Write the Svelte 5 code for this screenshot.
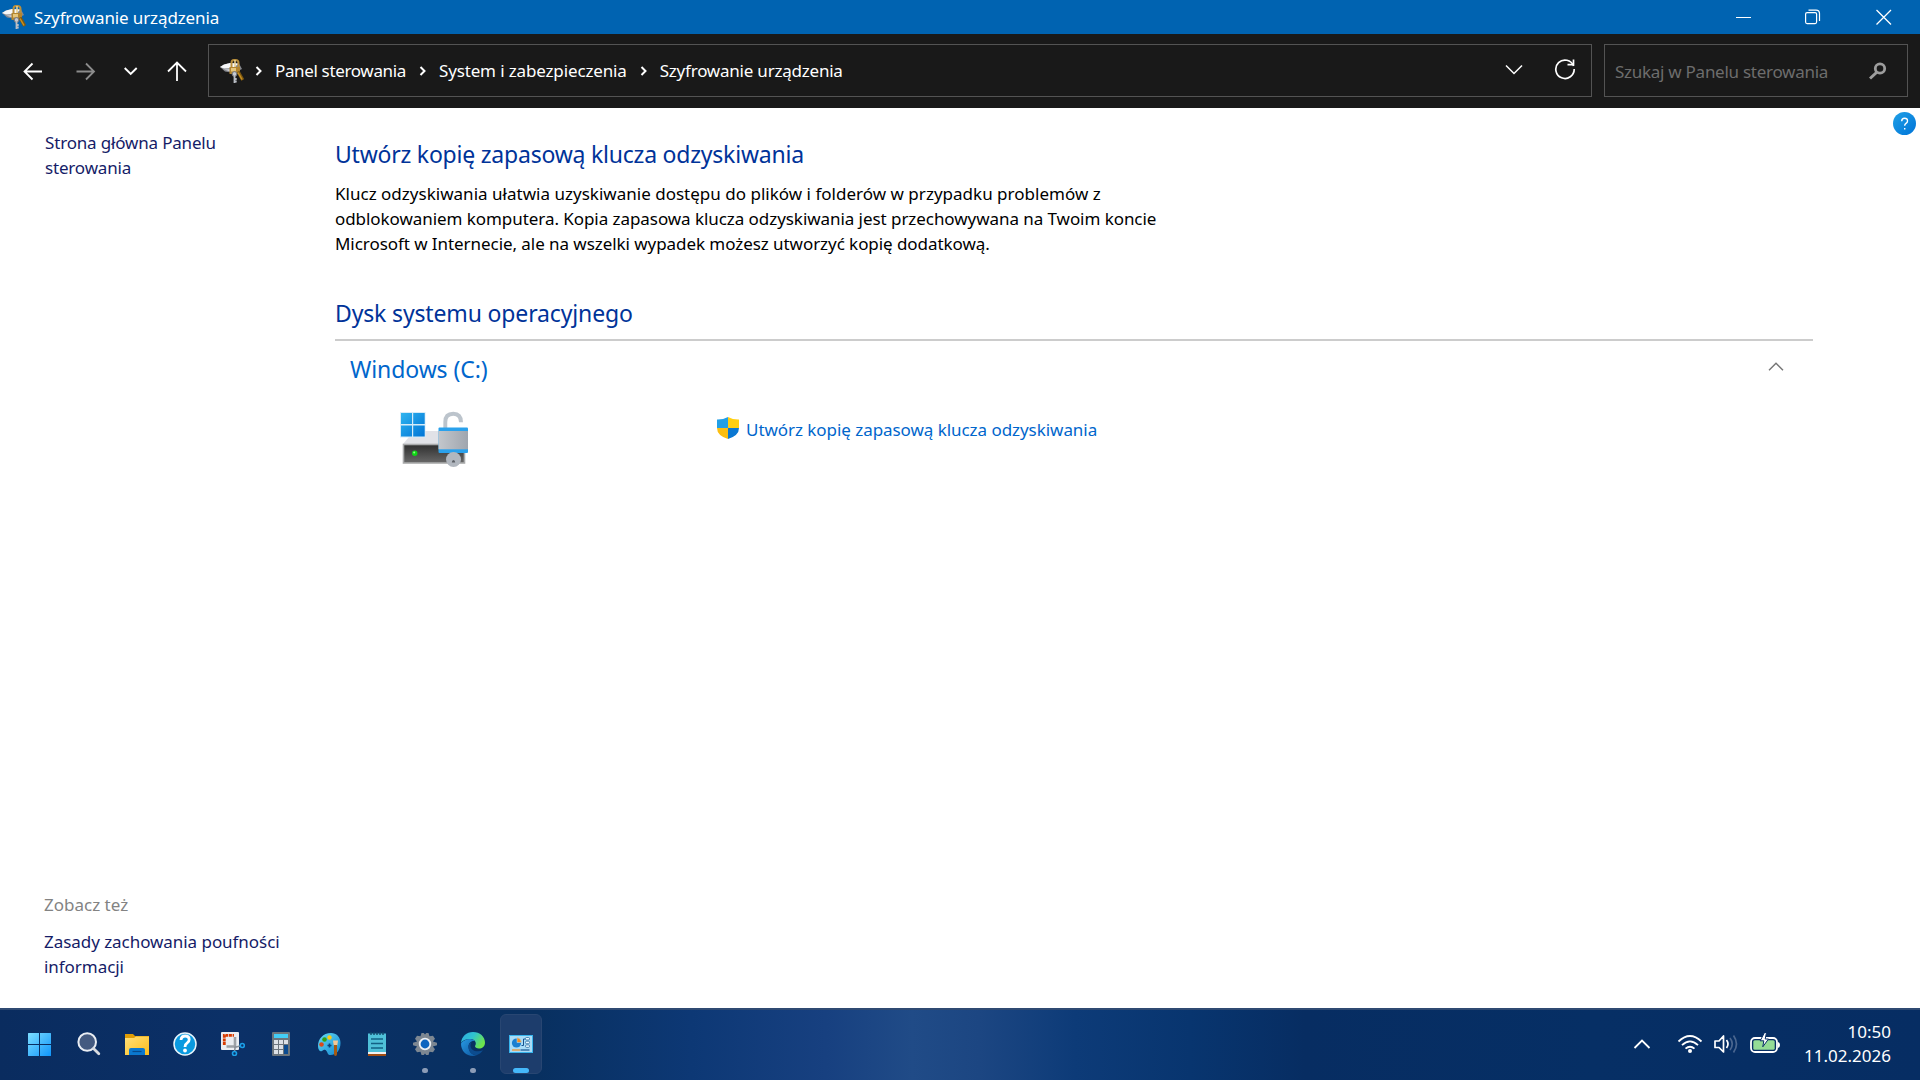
<script>
  const crumbs = [
    { id: 'panel', label: 'Panel sterowania' },
    { id: 'system', label: 'System i zabezpieczenia' },
    { id: 'device', label: 'Szyfrowanie urządzenia' }
  ];

  const lines = [
    'Klucz odzyskiwania ułatwia uzyskiwanie dostępu do plików i folderów w przypadku problemów z',
    'odblokowaniem komputera. Kopia zapasowa klucza odzyskiwania jest przechowywana na Twoim koncie',
    'Microsoft w Internecie, ale na wszelki wypadek możesz utworzyć kopię dodatkową.'
  ];

  const apps = [
    { name: 'start' },
    { name: 'search' },
    { name: 'explorer' },
    { name: 'help' },
    { name: 'snip' },
    { name: 'calc' },
    { name: 'paint' },
    { name: 'notepad' },
    { name: 'settings', running: true },
    { name: 'edge', running: true },
    { name: 'control', active: true }
  ];

  let expanded = $state(true);
  let query = $state('');
</script>

{#snippet keyIcon()}
  <svg class="key-icon" width="24" height="24" viewBox="0 0 24 24">
    <path d="M0 8l4-2.500L10 4l9 .5 3 5.500-8 4-9-1.500z" fill="#85878d" />
    <path d="M0 8l4-2.500L10 4l9 .5-6 4.500-9 .5z" fill="#f6f7f9" />
    <path d="M4 10.500l8-.5v3z" fill="#cfd1d6" />
    <path d="M11.500 8V4Q11.500 1 14 1h1.500Q18.500 1 18.500 4v4" fill="none" stroke="#b98f3c" stroke-width="2" />
    <path d="M15 1v8" stroke="#e9d08f" stroke-width="1.600" />
    <path d="M9.500 8h10.500v7H9.500z" fill="#b3852f" />
    <path d="M11 9h5v3.500h-5z" fill="#e6c67a" />
    <path d="M18 12.500l4.800 8.500" stroke="#7d5810" stroke-width="3.400" />
    <path d="M18 13.500l4 7" stroke="#c99122" stroke-width="1.500" />
    <circle cx="14.500" cy="15" r="2.400" fill="#c7cbd1" stroke="#6f7177" />
    <path d="M14.500 17v7M15 20h1.700M15 22.500h1.700" stroke="#b9bdc4" stroke-width="1.800" />
  </svg>
{/snippet}

{#snippet crumbArrow()}
  <svg class="crumb-arrow" width="8" height="12" viewBox="0 0 8 12">
    <path d="M1.500 2l4 4-4 4" fill="none" stroke="#fff" stroke-width="2" />
  </svg>
{/snippet}

{#snippet appIcon(name)}
  <svg width="24" height="24" viewBox="0 0 24 24">
    {#if name === 'start'}
      <defs>
        <linearGradient id="start" x1="0" y1="0" x2="24" y2="24" gradientUnits="userSpaceOnUse">
          <stop offset="0" stop-color="#7fdfff" />
          <stop offset="1" stop-color="#0d94fb" />
        </linearGradient>
      </defs>
      <path d="M0 1.500q0-.5.5-.5H11v11H0zM12 1h10.500q.5 0 .5.500V12H12zM0 13h11v11H.5q-.5 0-.5-.5zM12 13h11v10.500q0 .5-.5.500H12z" fill="url(#start)" />
    {:else if name === 'search'}
      <circle cx="10.200" cy="10" r="8.800" fill="#445a80" stroke="#e9edf3" stroke-width="2" />
      <path d="M16.500 16.500l5.300 5.300" stroke="#d8dbe0" stroke-width="2.800" stroke-linecap="round" />
    {:else if name === 'explorer'}
      <defs>
        <linearGradient id="folder" x1="0" y1="0" x2="1" y2="1">
          <stop offset="0" stop-color="#ffe07a" />
          <stop offset="1" stop-color="#fdbd19" />
        </linearGradient>
      </defs>
      <path d="M0 2h8l2 2h14v8H0z" fill="#e09d05" />
      <path d="M0 6h9l2-1.500h13V23H0z" fill="url(#folder)" />
      <path d="M4 23v-5q0-2 2-2h12q2 0 2 2v5z" fill="#0b78cf" />
      <path d="M7.500 19.500h9" stroke="#06498c" stroke-width="1.200" />
    {:else if name === 'help'}
      <circle cx="12" cy="12" r="11" fill="#0a9ae0" stroke="#e8f4fb" stroke-width="1.500" />
      <path d="M8 8q.3-4 4.200-4 4 0 4 3.500 0 2-2 3.400-2.200 1.400-2.200 4" fill="none" stroke="#fff" stroke-width="2.800" />
      <circle cx="12" cy="18.500" r="1.900" fill="#fff" />
    {:else if name === 'snip'}
      <rect x="0" y="0" width="18" height="18" rx="1" fill="#eceef2" />
      <path d="M3.300 13V3.300H13" fill="none" stroke="#d83b01" stroke-width="2.800" stroke-dasharray="2.900 .7" />
      <path d="M5.500 14.500H14V5" fill="none" stroke="#9da1a6" stroke-width="2.600" />
      <path d="M13 15.500l6-1.500M14.500 14l-1 5" stroke="#8b9199" stroke-width="1.500" />
      <circle cx="21.300" cy="13.500" r="2" fill="none" stroke="#1ba0e8" stroke-width="1.600" />
      <circle cx="13.500" cy="21.500" r="2" fill="none" stroke="#1ba0e8" stroke-width="1.600" />
    {:else if name === 'calc'}
      <rect x="3" y="0" width="18" height="24" rx="1" fill="#6c757d" />
      <rect x="5" y="2" width="14" height="4" fill="#43cdf6" />
      <path d="M5 8h4v4H5zM10 8h4v4h-4zM15 8h4v4h-4zM5 13h4v4H5zM10 13h4v4h-4zM5 18h4v4H5zM10 18h4v4h-4z" fill="#dde1e6" />
      <path d="M15 13h4v9h-4z" fill="#0b4b91" />
    {:else if name === 'paint'}
      <defs>
        <linearGradient id="palette" x1="0" y1="0" x2="1" y2="1">
          <stop offset="0" stop-color="#62dcf5" />
          <stop offset="1" stop-color="#1487d2" />
        </linearGradient>
      </defs>
      <path d="M14 1C6 1 1 7 1 14c0 4 2 6 4 5s3-2 4.500 0 1 4 4 4c6 0 10-5 10-12 0-6-4-10-9.500-10z" fill="url(#palette)" />
      <circle cx="12.500" cy="5.500" r="2.200" fill="#ffc90e" />
      <circle cx="7.500" cy="7.500" r="2.300" fill="#36a10e" />
      <circle cx="4.500" cy="12.500" r="2.300" fill="#d84a1b" />
      <path d="M12.500 11.500v4M10.500 13.500h4" stroke="#0b4277" stroke-width="1.600" />
      <path d="M16 8.500h5l-.7 5h-3.600z" fill="#f3c896" />
      <path d="M17 13h3v9q0 2-1.500 2T17 22z" fill="#a65a12" />
    {:else if name === 'notepad'}
      <rect x="3" y="1.500" width="18" height="21" fill="#4fc0d8" />
      <path d="M3 20h18v2H3z" fill="#f1f1f1" />
      <path d="M3 22h18v2H3z" fill="#a14d13" />
      <path d="M6 0v3M9 0v3M12 0v3M15 0v3M18 0v3" stroke="#12466a" stroke-width="1.400" />
      <path d="M6 7h12M6 11.500h12M6 16h12" stroke="#136184" stroke-width="1.600" />
    {:else if name === 'settings'}
      <path d="M8.500 1h2.300L12 2.500 13.200 1h2.300l1 3.300 3.500-.5 2 3-2.100 2.700 4.100 1.200v2.600l-4.100 1.200 2.100 2.700-2 3-3.500-.5-1 3.300h-2.300L12 21.500 10.800 23H8.500l-1-3.300-3.500.5-2-3 2.100-2.700L0 13.300v-2.600l4.100-1.200L2 6.800l2-3 3.500.5z" fill="#7d8792" />
      <circle cx="12" cy="12" r="5.300" fill="#0e65c0" stroke="#edf0f4" stroke-width="1.800" />
    {:else if name === 'edge'}
      <defs>
        <linearGradient id="edge-top" x1="0" y1="0" x2="1" y2=".5">
          <stop offset="0" stop-color="#2ea9e5" />
          <stop offset=".5" stop-color="#2fc3cf" />
          <stop offset="1" stop-color="#6de44c" />
        </linearGradient>
        <linearGradient id="edge-side" x1="0" y1="0" x2="1" y2="1">
          <stop offset="0" stop-color="#289be4" />
          <stop offset="1" stop-color="#0d559f" />
        </linearGradient>
      </defs>
      <path d="M0 11C.5 4.500 5.500 0 12 0c7 0 12 4.800 12 10.500 0 4-2.800 6-6 6-2.500 0-4-1-4-2.200 0-.8.8-1.200.8-2.800C14.800 9 12.500 7 9 7c-4 0-7.500 1.500-9 4z" fill="url(#edge-top)" />
      <path d="M0 11.500C2 8.500 5.500 7 9 7c2 0 4 .7 5 2-4-.7-6.500 2-6.500 5.500 0 5 3.500 8.500 8 8.700-1.200.6-2.500.8-3.500.8C5 24 0 19 0 11.500z" fill="url(#edge-side)" />
      <path d="M10.500 9.800C9 11 7.500 12.500 7.500 15c0 4.500 3.500 8.200 8 8.200 3-1 5-2.800 6.500-5-6 2.500-12.500.5-12.500-4.700 0-1.500.4-2.700 1-3.700z" fill="#0c4c8f" />
    {:else if name === 'control'}
      <rect x=".5" y="3.500" width="23" height="17" fill="#a9dcf7" stroke="#38b5ee" />
      <circle cx="7.500" cy="11" r="4.600" fill="#1b7fd0" />
      <path d="M8 10.500V5.500q4.200.5 4.500 5z" fill="#f58b1f" stroke="#a9dcf7" stroke-width=".6" />
      <path d="M12.500 13.500h2V7h2" fill="none" stroke="#16518e" stroke-width="1" />
      <rect x="16.500" y="5.500" width="4" height="2.500" rx="1" fill="#e8f6fe" stroke="#2e6d9f" stroke-width=".8" />
      <rect x="16.500" y="9.200" width="4" height="2.500" rx="1" fill="#e8f6fe" stroke="#2e6d9f" stroke-width=".8" />
      <rect x="16.500" y="12.900" width="4" height="2.500" rx="1" fill="#e8f6fe" stroke="#2e6d9f" stroke-width=".8" />
      <path d="M3 18h8" stroke="#f58b1f" stroke-width="1.200" />
      <path d="M11.500 18h9" stroke="#16518e" stroke-width="1.200" />
    {/if}
  </svg>
{/snippet}

<div class="window">
  <header class="titlebar">
    {@render keyIcon()}
    <span class="title">Szyfrowanie urządzenia</span>
    <div class="window-buttons">
      <button class="minimize" aria-label="Minimalizuj">
        <svg width="16" height="16" viewBox="0 0 16 16"><path d="M1 8.500h15" stroke="#fff" /></svg>
      </button>
      <button class="restore" aria-label="Przywróć w dół">
        <svg width="16" height="16" viewBox="0 0 16 16" fill="none" stroke="#fff" stroke-width="1.200">
          <rect x=".6" y="3.600" width="11" height="11" rx="1.500" />
          <path d="M3.500 1.100H11q3.500 0 3.500 3.500v7.500" />
        </svg>
      </button>
      <button class="close" aria-label="Zamknij">
        <svg width="16" height="16" viewBox="0 0 16 16"><path d="M.5 1l14.500 14.500M15 1L.5 15.500" stroke="#fff" stroke-width="1.300" /></svg>
      </button>
    </div>
  </header>

  <nav class="toolbar">
    <div class="history">
      <svg width="20" height="20" viewBox="0 0 20 20" fill="none" stroke="#fff" stroke-width="1.800"><path d="M19 10.500H2M9.500 2.500l-8 8 8 8" /></svg>
      <svg width="20" height="20" viewBox="0 0 20 20" fill="none" stroke="#8c8c8c" stroke-width="1.800"><path d="M.5 10.500h17M10 2.500l8 8-8 8" /></svg>
      <svg width="14" height="20" viewBox="0 0 14 20" fill="none" stroke="#fff" stroke-width="1.900"><path d="M.7 7l6 6 6-6" /></svg>
      <svg width="20" height="20" viewBox="0 0 20 20" fill="none" stroke="#fff" stroke-width="1.800"><path d="M10 20V1.500M1 10.500l9-9 9 9" /></svg>
    </div>

    <div class="address">
      {@render keyIcon()}
      {#each crumbs as crumb (crumb.id)}
        {@render crumbArrow()}
        <span class="crumb {crumb.id}">{crumb.label}</span>
      {/each}
      <svg class="address-open" width="18" height="12" viewBox="0 0 18 12" fill="none" stroke="#fff" stroke-width="1.500"><path d="M1 1.500l8 8 8-8" /></svg>
      <svg class="refresh" width="22" height="22" viewBox="0 0 22 22" fill="none" stroke="#fff" stroke-width="1.700">
        <path d="M19.600 8A9.200 9.200 0 1 0 20.200 11" />
        <path d="M19.500 1.500v5.200h-6" />
      </svg>
    </div>

    <label class="search">
      <input type="text" placeholder="Szukaj w Panelu sterowania" bind:value={query} />
      <svg width="18" height="18" viewBox="0 0 18 18" fill="none" stroke="#9d9d9d">
        <circle cx="11" cy="6.500" r="4.700" stroke-width="2.800" />
        <path d="M7.500 10.500l-6.500 6" stroke-width="3" />
      </svg>
    </label>
  </nav>

  <div class="body">
    <aside class="sidebar">
      <a class="home" href="#home">Strona główna Panelu<br />sterowania</a>
      <div class="see-also">
        <p class="see-title">Zobacz też</p>
        <a class="privacy" href="#privacy">Zasady zachowania poufności<br />informacji</a>
      </div>
    </aside>

    <main class="content">
      <h1>Utwórz kopię zapasową klucza odzyskiwania</h1>
      <p class="intro">
        {#each lines as line, i}
          <span class="line line-{i + 1}">{line}</span>
        {/each}
      </p>
      <h2>Dysk systemu operacyjnego</h2>

      <section class="drive">
        <div class="drive-head">
          <h3>Windows (C:)</h3>
          <button class="toggle" aria-label="Zwiń" onclick={() => (expanded = !expanded)}>
            <svg class:collapsed={!expanded} width="16" height="9" viewBox="0 0 16 9" fill="none" stroke="#757575" stroke-width="1.400"><path d="M1 8.300l7-7 7 7" /></svg>
          </button>
        </div>

        {#if expanded}
          <div class="drive-body">
            <svg class="drive-icon" width="70" height="58" viewBox="0 0 70 58">
              <defs>
                <linearGradient id="win" x1="0" y1="0" x2="1" y2="1">
                  <stop offset="0" stop-color="#2fb4ef" />
                  <stop offset="1" stop-color="#0074d6" />
                </linearGradient>
                <linearGradient id="disk" x1="0" y1="0" x2="0" y2="1">
                  <stop offset="0" stop-color="#2e2e2e" />
                  <stop offset="1" stop-color="#696969" />
                </linearGradient>
                <linearGradient id="lock" x1="0" y1="0" x2="1" y2="0">
                  <stop offset="0" stop-color="#c3c7cc" />
                  <stop offset="1" stop-color="#9fa5ae" />
                </linearGradient>
              </defs>
              <path d="M3 34l11-13h38l13 13z" fill="#e1e2e7" />
              <rect x="3.500" y="34.500" width="61" height="18.500" fill="url(#disk)" stroke="#a9aaab" stroke-width="1.600" />
              <circle cx="14.700" cy="43.300" r="2.700" fill="#0fd615" />
              <circle cx="14.200" cy="42.500" r="1" fill="#8bff86" />
              <path d="M0 2h25.500v25.500H0z" fill="#d5ebf8" />
              <path d="M1 3h11v11H1zM13.200 3h11.500v11H13.200zM1 15.500h11v11H1zM13.200 15.500h11.500v11H13.200z" fill="url(#win)" />
              <path d="M45.300 18V12q0-8.300 8-8.300 7.700 0 7.700 8.600" fill="none" stroke="#bcc4cc" stroke-width="3.900" />
              <rect x="38.500" y="17.500" width="29.500" height="25.500" rx="1" fill="#2aa1ec" />
              <path d="M38.500 21h29.500v18.300h-29.500z" fill="url(#lock)" />
              <circle cx="53.500" cy="49.500" r="7.500" fill="#b1b7bf" />
              <path d="M51.800 52.500q0-2.500 1.700-2.500t1.700 2.500z" fill="#5c6066" />
            </svg>
            <a class="backup" href="#backup">
              <svg width="22" height="22" viewBox="0 0 22 22">
                <defs>
                  <clipPath id="shield"><path d="M11 0q5 2.700 11 2.500V11q0 7.500-11 11Q0 18.500 0 11V2.500Q6 2.700 11 0z" /></clipPath>
                </defs>
                <g clip-path="url(#shield)">
                  <path d="M0 0h11v11H0z" fill="#229fe6" />
                  <path d="M11 0h11v11H11z" fill="#ffcf12" />
                  <path d="M0 11h11v11H0z" fill="#fcbe10" />
                  <path d="M11 11h11v11H11z" fill="#0b78d2" />
                </g>
              </svg>
              <span>Utwórz kopię zapasową klucza odzyskiwania</span>
            </a>
          </div>
        {/if}
      </section>
    </main>

    <svg class="help" width="23" height="23" viewBox="0 0 23 23">
      <defs>
        <linearGradient id="help" x1="0" y1="0" x2="1" y2="1">
          <stop offset="0" stop-color="#1fa0e6" />
          <stop offset="1" stop-color="#0074d8" />
        </linearGradient>
      </defs>
      <circle cx="11.500" cy="11.500" r="11.500" fill="url(#help)" />
      <path d="M8.700 9.200q0-3 2.900-3t2.900 2.700q0 1.400-1.500 2.400-1.300.9-1.300 2.500" fill="none" stroke="#fff" stroke-width="1.400" />
      <path d="M11 16h1.400v1.500H11z" fill="#fff" />
    </svg>
  </div>

  <footer class="taskbar">
    <div class="apps">
      {#each apps as app (app.name)}
        <div class="app" class:running={app.running} class:active={app.active}>
          {@render appIcon(app.name)}
        </div>
      {/each}
    </div>

    <div class="tray">
      <svg class="tray-open" width="18" height="12" viewBox="0 0 18 12" fill="none" stroke="#fff" stroke-width="1.800"><path d="M1.500 10L9 2.500l7.500 7.500" /></svg>
      <svg class="wifi" width="26" height="20" viewBox="0 0 26 20" fill="none" stroke="#fff" stroke-width="1.800">
        <path d="M1.500 7.500q11.500-11 23 0M5 11.200q8-7.600 16 0M8.500 14.700q4.500-4 9 0" />
        <circle cx="13" cy="17" r="2" fill="#fff" stroke="none" />
      </svg>
      <svg class="volume" width="26" height="20" viewBox="0 0 26 20" fill="none" stroke="#fff" stroke-width="1.700">
        <path d="M2 7h4l4.500-5v16L6 13.500H2z" stroke-linejoin="round" />
        <path d="M13.500 6q3 4 0 8" />
        <path d="M17 4q4.500 6 0 12M20.500 1.500q6 8.500 0 17" stroke="#4a668f" />
      </svg>
      <svg class="battery" width="30" height="22" viewBox="0 0 30 22">
        <rect x="1" y="5" width="26" height="14" rx="4" fill="none" stroke="#fff" stroke-width="1.800" />
        <rect x="3.300" y="7.300" width="21.400" height="9.400" rx="1.500" fill="#94dc96" />
        <path d="M28 9q2 .5 2 3t-2 3z" fill="#fff" />
        <path d="M14.500-.5l-4.300 8.300h3.600l-1 6 5.700-7.800h-3.300l1.300-6.500z" fill="#fff" stroke="#0a3067" stroke-width="1" />
      </svg>
      <div class="clock">
        <span class="time">10:50</span>
        <span class="date">11.02.2026</span>
      </div>
    </div>
  </footer>
</div>

<style>
  :global(body) {
    margin: 0;
  }

  .window {
    display: flex;
    flex-direction: column;
    width: 1920px;
    height: 1080px;
    overflow: hidden;
    background: #fff;
    color: #000;
    font-family: "Noto Sans", "Open Sans", sans-serif;
    font-size: 17px;
    line-height: 25px;
    white-space: nowrap;
  }

  svg {
    display: block;
    flex: none;
  }

  a {
    text-decoration: none;
  }

  h1, h2, h3, p {
    margin: 0;
    font-weight: 400;
  }

  button {
    display: flex;
    align-items: center;
    justify-content: center;
    padding: 0;
    border: 0;
    background: none;
  }

  .titlebar {
    display: flex;
    align-items: center;
    height: 34px;
    padding-left: 2px;
    background: #0063b1;
    color: #fff;
  }

  .title {
    margin-left: 8px;
    letter-spacing: -0.12px;
  }

  .window-buttons {
    display: flex;
    margin-left: auto;
  }

  .window-buttons button {
    height: 33px;
  }

  .minimize {
    width: 68px;
  }

  .restore {
    width: 71px;
  }

  .close {
    width: 72px;
  }

  .toolbar {
    display: flex;
    align-items: center;
    height: 74px;
    box-sizing: border-box;
    padding: 0 12px 1px 0;
    background: #191919;
    color: #fff;
  }

  .history {
    display: flex;
    align-items: center;
    width: 208px;
    box-sizing: border-box;
    padding-left: 23px;
  }

  .history svg:nth-child(2) {
    margin-left: 33px;
  }

  .history svg:nth-child(3) {
    margin-left: 28px;
  }

  .history svg:nth-child(4) {
    margin-left: 29px;
  }

  .address,
  .search {
    display: flex;
    align-items: center;
    height: 53px;
    box-sizing: border-box;
    border: 1px solid #535353;
  }

  .address {
    width: 1384px;
    padding: 0 15px 0 11px;
  }

  .address .key-icon {
    margin-right: -1px;
  }

  .crumb-arrow {
    margin: 0 12px;
  }

  .panel {
    margin-right: 1px;
    letter-spacing: -0.35px;
  }

  .system {
    margin-right: 1px;
    letter-spacing: -0.14px;
  }

  .device {
    letter-spacing: -0.22px;
  }

  .address-open {
    margin: 0 0 2px auto;
  }

  .refresh {
    margin: 0 0 3px 31px;
  }

  .search {
    flex: 1;
    margin-left: 12px;
    padding: 0 20px 0 10px;
  }

  .search input {
    flex: 1;
    min-width: 0;
    padding: 2px 0 0;
    border: 0;
    outline: 0;
    background: none;
    color: #fff;
    font: inherit;
    letter-spacing: -0.27px;
  }

  .search input::placeholder {
    color: #6d6d6d;
    opacity: 1;
  }

  .body {
    display: flex;
    flex: 1;
    min-height: 0;
  }

  .sidebar {
    display: flex;
    flex-direction: column;
    justify-content: space-between;
    width: 335px;
    box-sizing: border-box;
    padding: 22px 0 29px 44px;
  }

  .sidebar a {
    display: block;
    color: #151c67;
  }

  .home {
    padding-left: 1px;
    letter-spacing: -0.17px;
  }

  .see-title {
    margin-bottom: 12px;
    color: #838383;
  }

  .privacy {
    letter-spacing: -0.05px;
  }

  .content {
    width: 1478px;
    padding-top: 28px;
  }

  h1, h2, h3 {
    font-size: 23px;
    line-height: 36px;
    color: #003399;
  }

  h1 {
    letter-spacing: -0.22px;
  }

  .intro {
    margin-top: 9px;
  }

  .line {
    display: block;
  }

  .line-1 {
    letter-spacing: 0.015px;
  }

  .line-2,
  .line-3 {
    letter-spacing: -0.058px;
  }

  h2 {
    margin-top: 39px;
    padding-bottom: 8px;
    border-bottom: 2px solid #ccc;
    letter-spacing: -0.15px;
  }

  .drive-head {
    display: flex;
    align-items: center;
    justify-content: space-between;
    padding: 10px 29px 0 15px;
  }

  h3 {
    color: #0066cc;
    letter-spacing: -0.1px;
  }

  .toggle {
    margin-bottom: 6px;
  }

  .collapsed {
    transform: rotate(180deg);
  }

  .drive-body {
    display: flex;
    padding: 23px 0 0 65px;
  }

  .backup {
    display: flex;
    margin-left: 247px;
    padding-top: 7px;
    height: 25px;
    color: #0066cc;
    letter-spacing: -0.05px;
  }

  .backup span {
    margin-left: 7px;
  }

  .help {
    margin: 4px 4px 0 auto;
  }

  .taskbar {
    display: flex;
    align-items: center;
    height: 72px;
    box-sizing: border-box;
    padding-bottom: 2px;
    border-top: 2px solid #2f4a72;
    background: linear-gradient(90deg, #0a2c5f 0%, #0b3067 12%, #083060 28%, #0d3875 36%, #174080 43%, #204b87 47.500%, #1c4682 51%, #0d3b78 56%, #08356f 62%, #072d62 68%, #062f65 83%, #062d63 100%);
    color: #fff;
  }

  .apps {
    display: flex;
    padding-left: 20px;
  }

  .app {
    position: relative;
    display: flex;
    align-items: center;
    justify-content: center;
    width: 42px;
    height: 60px;
    margin-right: 6px;
    box-sizing: border-box;
    border-radius: 6px;
  }

  .app:first-child {
    margin-left: -1px;
    margin-right: 7px;
  }

  .app.active {
    border: 1px solid #284672;
    background: #1d3d6c;
  }

  .app.running::after,
  .app.active::after {
    content: "";
    position: absolute;
    bottom: 1px;
    width: 6px;
    height: 5px;
    border-radius: 3px;
    background: #8c9cb7;
  }

  .app.active::after {
    bottom: 0;
    width: 16px;
    background: #45b8fa;
  }

  .tray {
    display: flex;
    align-items: center;
    margin-left: auto;
    padding-right: 29px;
  }

  .wifi {
    margin-left: 26px;
  }

  .volume {
    margin-left: 10px;
  }

  .battery {
    margin-left: 11px;
  }

  .clock {
    display: flex;
    flex-direction: column;
    align-items: flex-end;
    width: 111px;
    line-height: 24px;
  }
</style>
